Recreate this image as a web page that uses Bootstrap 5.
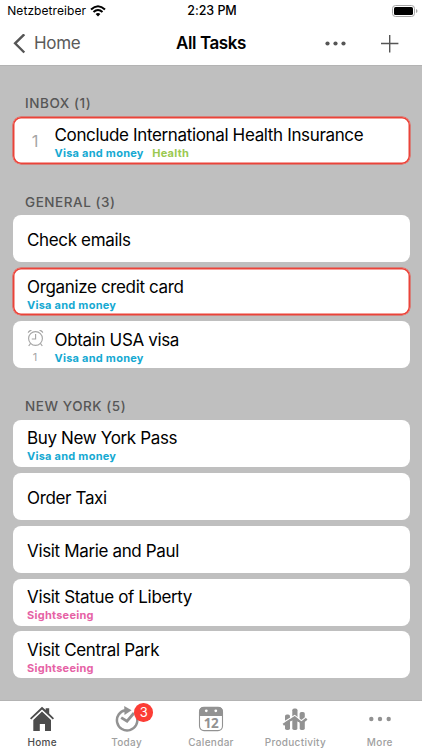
<!DOCTYPE html>
<html lang="en">
<head>
<meta charset="utf-8">
<meta name="viewport" content="width=device-width, initial-scale=1">
<title>All Tasks</title>
<link href="https://cdn.jsdelivr.net/npm/bootstrap@5.3.0/dist/css/bootstrap.min.css" rel="stylesheet">
<style>
body{font-family:Inter,"Liberation Sans",sans-serif;background:#bfbfbf;color:#000;height:750px;overflow:hidden}
svg{display:block;flex:none}
.status-bar{height:22px;font-size:12px;line-height:22px}
.status-bar .carrier{letter-spacing:.08px;margin-left:-.8px}
.status-bar .clock{font-weight:500;font-size:12.5px;margin-right:2px;letter-spacing:-.05px}
.title-bar{height:44px;border-bottom:1px solid #b3b3b3;color:#555}
.back-icon{margin-left:13px}
.add-icon{margin:0 23px 0 34px}
.back-label{font-size:17px;color:#5a5a5a;letter-spacing:-.3px}
.page-title{font-size:17px;font-weight:600;letter-spacing:-.4px;color:#000}
.task-area{padding:27px 12.5px 0}
.task-group{margin-bottom:28.3px}
.group-label{font-size:13.5px;font-weight:500;line-height:20px;color:#565656;padding-left:12.5px;margin-bottom:3.5px;letter-spacing:.55px}
.task-list{gap:5.9px}
.task{height:47px;background:#fff;border-radius:8px;padding-left:14.5px}
.task.flagged{box-shadow:inset 0 0 0 1.5px #ea4339,0 0 0 .5px #ea4339}
.task-name{font-size:17px;line-height:21px;letter-spacing:-.35px;white-space:nowrap}
.task-info{padding-top:5px}
.task-tags{font-size:11px;line-height:14px;font-weight:700;letter-spacing:.25px;gap:8.5px}
.tag-money{color:#16a9d2}.tag-health{color:#9bc950}.tag-sight{color:#e662a5}
.task-side{width:27.5px;color:#a6a6a6}
.side-num{font-size:16.5px;line-height:20px;width:16px;text-align:center;padding-top:2px}
.side-small{font-size:11px;line-height:13px;width:16px;text-align:center}
.tab-bar{height:50px;border-top:1px solid #b3b3b3;color:#929292}
.tab-item{font-size:10px;font-weight:500;line-height:12px;letter-spacing:.3px;color:#a0a0a0;padding-top:5px}
.tab-item svg{color:#929292;margin-bottom:4px}
.tab-item.current,.tab-item.current svg{color:#4c4c4c}
.tab-count{position:absolute;left:50px;top:2px;width:18.5px;height:18.5px;border-radius:50%;background:#fc3d35;color:#fff;font-size:13px;line-height:18.5px;font-weight:400;text-align:center;letter-spacing:0}
</style>
</head>
<body class="d-flex flex-column">
<header class="bg-white">
  <div class="status-bar row g-0">
    <div class="col d-flex align-items-center ps-2"><span class="carrier">Netzbetreiber</span>
      <svg class="ms-1" width="16" height="12" viewBox="0 0 16 12"><g fill="none" stroke="#000" stroke-width="2.1"><path d="M1 4.5Q8-2 15 4.5"/><path d="M3.5 7.1Q8 2.9 12.5 7.1"/></g><path d="M5.6 9.1Q8 7 10.4 9.1L8 11.5Z"/></svg>
    </div>
    <div class="col-auto clock">2:23 PM</div>
    <div class="col d-flex align-items-center justify-content-end pe-1">
      <svg width="26" height="12" viewBox="0 0 26 12"><rect x=".5" y=".5" width="22" height="11" rx="3" fill="#fff" stroke="#a5a5a5"/><rect x="2" y="2" width="19" height="8" rx="1.6"/><path d="M24 4Q25.5 4.6 25.5 6T24 8Z" fill="#a5a5a5"/></svg>
    </div>
  </div>
  <nav class="title-bar row g-0 align-items-center">
    <div class="col d-flex align-items-center">
      <svg class="back-icon" width="13" height="20" viewBox="0 0 13 20"><path d="M11.3.3 2.1 9.3l9.2 9.2" fill="none" stroke="#555" stroke-width="2.4"/></svg>
      <span class="back-label ps-2">Home</span>
    </div>
    <div class="col-auto page-title">All Tasks</div>
    <div class="col d-flex align-items-center justify-content-end">
      <svg width="22" height="6" viewBox="0 0 22 6" fill="#555"><circle cx="2.5" cy="2.5" r="2.1"/><circle cx="10.5" cy="2.5" r="2.1"/><circle cx="18.5" cy="2.5" r="2.1"/></svg>
      <svg class="add-icon" width="18" height="18" viewBox="0 0 18 18"><path d="M0 8.5h17.4M8.7 0v17.5" stroke="#555" stroke-width="1.4"/></svg>
    </div>
  </nav>
</header>

<main class="task-area flex-grow-1">
  <section class="task-group">
    <h2 class="group-label">INBOX (1)</h2>
    <div class="task-list d-flex flex-column">
      <article class="task flagged d-flex align-items-center">
        <div class="task-side"><div class="side-num">1</div></div>
        <div class="task-info"><div class="task-name">Conclude International Health Insurance</div><div class="task-tags d-flex"><span class="tag-money">Visa and money</span><span class="tag-health">Health</span></div></div>
      </article>
    </div>
  </section>
  <section class="task-group">
    <h2 class="group-label">GENERAL (3)</h2>
    <div class="task-list d-flex flex-column">
      <article class="task d-flex align-items-center"><div class="task-name pt-1">Check emails</div></article>
      <article class="task flagged d-flex align-items-center">
        <div class="task-info"><div class="task-name">Organize credit card</div><div class="task-tags"><span class="tag-money">Visa and money</span></div></div>
      </article>
      <article class="task d-flex align-items-center">
        <div class="task-side pt-1">
          <svg width="17" height="18" viewBox="0 0 17 18" fill="none" stroke="#a6a6a6" stroke-width="1.15"><circle cx="8.5" cy="9.5" r="6.9"/><path d="M8.6 5v5H4.8M3.6 14.3 1.7 17M13.4 14.3l1.9 2.7"/><path d="M.8 4.2C.6 1.8 3 .2 5 1.3ZM16.2 4.2C16.4 1.8 14 .2 12 1.3Z" fill="#a6a6a6" stroke="none"/></svg>
          <div class="side-small mt-1">1</div>
        </div>
        <div class="task-info"><div class="task-name">Obtain USA visa</div><div class="task-tags"><span class="tag-money">Visa and money</span></div></div>
      </article>
    </div>
  </section>
  <section class="task-group mb-0">
    <h2 class="group-label">NEW YORK (5)</h2>
    <div class="task-list d-flex flex-column">
      <article class="task d-flex align-items-center"><div class="task-info"><div class="task-name">Buy New York Pass</div><div class="task-tags"><span class="tag-money">Visa and money</span></div></div></article>
      <article class="task d-flex align-items-center"><div class="task-name pt-1">Order Taxi</div></article>
      <article class="task d-flex align-items-center"><div class="task-name pt-1">Visit Marie and Paul</div></article>
      <article class="task d-flex align-items-center"><div class="task-info"><div class="task-name">Visit Statue of Liberty</div><div class="task-tags"><span class="tag-sight">Sightseeing</span></div></div></article>
      <article class="task d-flex align-items-center"><div class="task-info"><div class="task-name">Visit Central Park</div><div class="task-tags"><span class="tag-sight">Sightseeing</span></div></div></article>
    </div>
  </section>
</main>

<nav class="tab-bar bg-white row g-0">
  <div class="tab-item current col d-flex flex-column align-items-center">
    <svg width="26" height="26" viewBox="0 0 26 26" fill="currentColor"><path d="M1 12.2 13 .8l3.7 3.3V2.2h3.5v5.2l4.8 4.8-1.2 1.2L13 3.6 2.2 13.4Z"/><path d="M13 5.5 22 14v11H16v-7h-5.2v7H4.3V14Z"/></svg>
    <span>Home</span>
  </div>
  <div class="tab-item col d-flex flex-column align-items-center position-relative">
    <svg width="26" height="26" viewBox="0 0 26 26" fill="none" stroke="currentColor"><path d="M11.5 4.2A10.2 10.2 0 1 0 22.8 11" stroke-width="2.5"/><path d="m10.2 0 7.4 4.3-7.1 4.6Z" fill="currentColor" stroke="none"/><path d="m7.2 11.6 5.8 3.6L20 7" stroke-width="2.8"/></svg>
    <span>Today</span><span class="tab-count">3</span>
  </div>
  <div class="tab-item col d-flex flex-column align-items-center">
    <svg width="26" height="26" viewBox="0 0 26 26"><rect x="1.5" y="1.4" width="23" height="23.2" rx="4.5" fill="#fff" stroke="currentColor" stroke-width="1.1"/><path d="M1 10V5.7Q1 .9 5.8.9h14.4Q25 .9 25 5.7V10Z" fill="currentColor"/><circle cx="8.3" cy="4.8" r="1.4" fill="#fff"/><circle cx="17.8" cy="4.8" r="1.4" fill="#fff"/><text x="13" y="22.3" text-anchor="middle" font-family="Open Sans,sans-serif" font-weight="700" font-size="13.5" letter-spacing="-.4" fill="currentColor">12</text></svg>
    <span>Calendar</span>
  </div>
  <div class="tab-item col d-flex flex-column align-items-center">
    <svg width="26" height="26" viewBox="0 0 26 26" fill="currentColor"><rect x="3" y="8.5" width="5" height="15.5" rx="1.8"/><rect x="10.3" y="2.5" width="5.2" height="21.5" rx="1.8"/><rect x="17.6" y="6" width="5.2" height="18" rx="1.8"/><path d="m2 16.2 10.7-6.7 6.7 5.4 5.3-4.2" fill="none" stroke="#fff" stroke-width="1.4"/><path d="m1.3 18.7 11.4-7.2 6.7 5.4 5.3-4.2" fill="none" stroke="currentColor" stroke-width="2.5"/><path d="M9.1 15.3v9M16.5 16v8" stroke="#fff" stroke-width="1.6"/></svg>
    <span>Productivity</span>
  </div>
  <div class="tab-item col d-flex flex-column align-items-center">
    <svg width="26" height="26" viewBox="0 0 26 26" fill="currentColor"><circle cx="4.3" cy="13" r="2.2"/><circle cx="13" cy="13" r="2.2"/><circle cx="21.7" cy="13" r="2.2"/></svg>
    <span>More</span>
  </div>
</nav>
<script src="https://cdn.jsdelivr.net/npm/bootstrap@5.3.0/dist/js/bootstrap.bundle.min.js"></script>
</body>
</html>
